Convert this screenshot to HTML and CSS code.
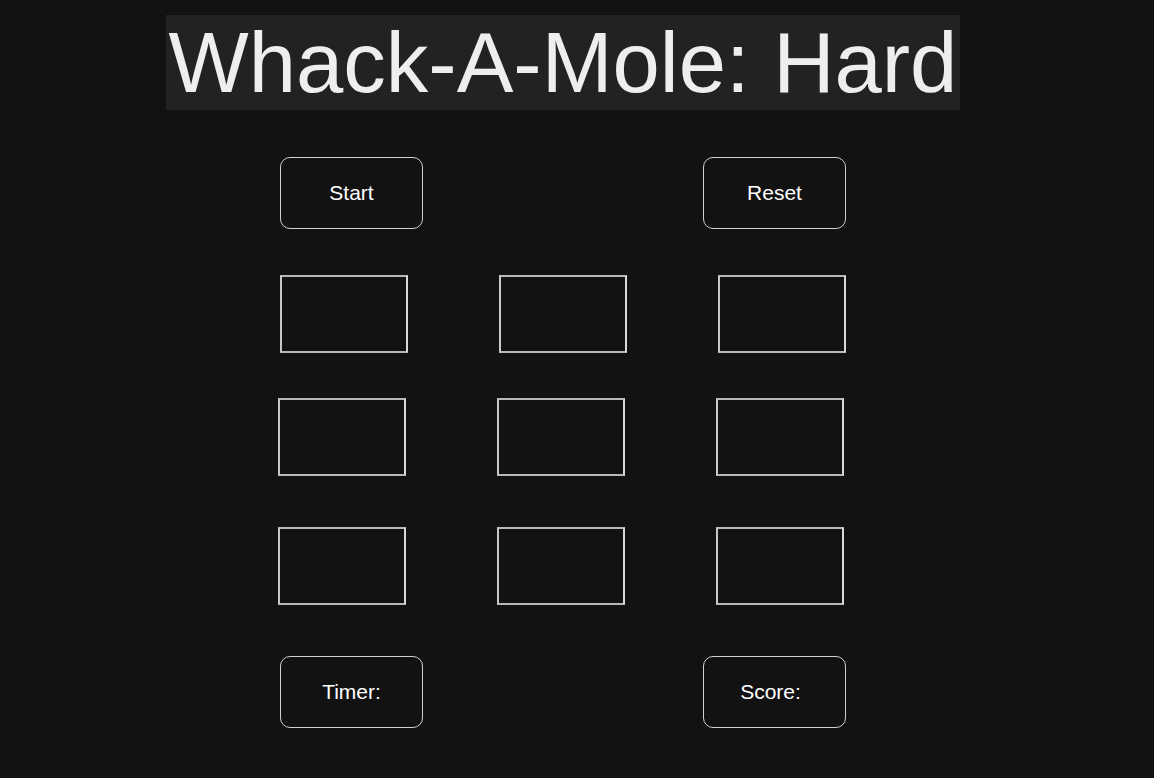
FILE: index.html
```html
<!DOCTYPE html>
<html>
<head>
<meta charset="utf-8">
<title>Whack-A-Mole: Hard</title>
<link rel="stylesheet" href="styles.css">
</head>
<body>
<div class="page">
  <header class="head"><h1 class="title">Whack-A-Mole: Hard</h1></header>
  <div class="controls top">
    <button class="btn">Start</button>
    <button class="btn">Reset</button>
  </div>
  <div class="board">
    <div class="row row1"><div class="hole"></div><div class="hole"></div><div class="hole"></div></div>
    <div class="row row2"><div class="hole"></div><div class="hole"></div><div class="hole"></div></div>
    <div class="row row3"><div class="hole"></div><div class="hole"></div><div class="hole"></div></div>
  </div>
  <div class="controls bottom">
    <div class="btn stat timer">Timer:</div>
    <div class="btn stat score">Score:</div>
  </div>
</div>
</body>
</html>
```
FILE: styles.css
```css
html, body {
  margin: 0;
  padding: 0;
  background: #121212;
  height: 100%;
}
body {
  font-family: "Liberation Sans", Arial, sans-serif;
  color: #ffffff;
}
.page {
  width: 1126px;
  display: flex;
  flex-direction: column;
  align-items: center;
  padding-top: 15px;
}
.head {
  display: flex;
  justify-content: center;
}
.title {
  margin: 0;
  background: #222222;
  color: #eeeeee;
  font-weight: normal;
  font-size: 85px;
  line-height: 95px;
  height: 95px;
  padding: 0 3px;
  white-space: nowrap;
}
.controls {
  width: 566px;
  display: flex;
  justify-content: space-between;
}
.controls.top {
  margin-top: 47px;
}
.btn {
  box-sizing: border-box;
  width: 143px;
  height: 72px;
  border: 1px solid #cfcfcf;
  border-radius: 10px;
  background: #121212;
  color: #ffffff;
  font-family: "Liberation Sans", Arial, sans-serif;
  font-size: 21px;
  display: flex;
  align-items: center;
  justify-content: center;
  padding: 0;
}
.board {
  display: flex;
  flex-direction: column;
  width: 566px;
}
.row {
  display: flex;
  gap: 91px;
}
.row1 { margin-top: 46px; }
.row2 { margin-top: 45px; margin-left: -2px; }
.row3 { margin-top: 51px; margin-left: -2px; }
.hole {
  box-sizing: border-box;
  width: 128px;
  height: 78px;
  border: 2px solid #b8b8b8;
  border-right-color: #d8d8d8;
  border-left-color: #c8c8c8;
}
.controls.bottom {
  margin-top: 51px;
}
.score {
  padding-right: 8px;
}
```
